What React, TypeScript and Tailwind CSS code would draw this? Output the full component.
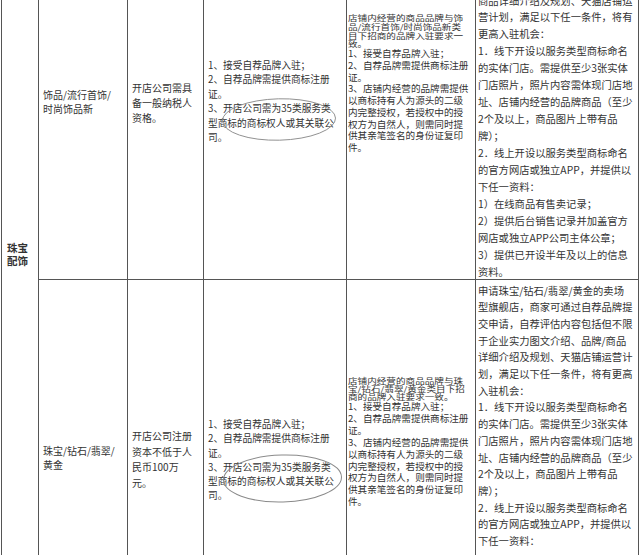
import React from 'react';

const font = { fontFamily: '"Noto Sans CJK SC", "Noto Sans", sans-serif' };

function Lines({ lines, className }: { lines: string[]; className?: string }) {
  return (
    <div className={className}>
      {lines.map((l, i) => (
        <div key={i} className="whitespace-nowrap">
          {l}
        </div>
      ))}
    </div>
  );
}

// hand-drawn ring that marks a clause
function Ring({ className }: { className: string }) {
  return (
    <svg className={`pointer-events-none absolute ${className}`} viewBox="0 0 120 50" preserveAspectRatio="none">
      <ellipse cx="60" cy="25" rx="58.5" ry="23" fill="none" stroke="#8a8a8a" strokeWidth="1" transform="rotate(-1.5 60 25)" />
    </svg>
  );
}

const brandRules = [
  '1、接受自荐品牌入驻；',
  '2、自荐品牌需提供商标注册',
  '证。',
  '3、开店公司需为35类服务类',
  '型商标的商标权人或其关联公',
  '司。',
];

const authRules = [
  '1、接受自荐品牌入驻；',
  '2、自荐品牌需提供商标注册',
  '证。',
  '3、店铺内经营的品牌需提供',
  '以商标持有人为源头的二级',
  '内完整授权，若授权中的授',
  '权方为自然人，则需同时提',
  '供其亲笔签名的身份证复印',
  '件。',
];

const conditions = [
  '1．线下开设以服务类型商标命名',
  '的实体门店。需提供至少3张实体',
  '门店照片，照片内容需体现门店地',
  '址、店铺内经营的品牌商品（至少',
  '2个及以上，商品图片上带有品',
  '牌）；',
  '2．线上开设以服务类型商标命名',
  '的官方网店或独立APP，并提供以',
  '下任一资料：',
];

const cell = 'border-r border-[#555] text-[#333]';

export default function App() {
  return (
    <div className="h-[555px] w-[640px] overflow-hidden bg-white" style={font}>
      <div className="ml-[1px] grid grid-cols-[37px_89px_76px_143px_129px_163px] grid-rows-[280px_300px] border-l border-[#555]">
        <div className={`${cell} row-span-2 pl-[5px] pt-[241px] text-[10.5px] font-bold leading-[13px] text-[#222]`}>
          <Lines lines={['珠宝', '配饰']} />
        </div>

        {/* row 1 */}
        <div className={`${cell} border-b pl-[4px] pt-[88px] text-[10px] leading-[13.5px]`}>
          <Lines lines={['饰品/流行首饰/', '时尚饰品新']} />
        </div>
        <div className={`${cell} border-b pl-[4px] pt-[80px] text-[10px] leading-[15px]`}>
          <Lines lines={['开店公司需具', '备一般纳税人', '资格。']} />
        </div>
        <div className={`${cell} relative border-b pl-[4px] pt-[58px] text-[9.7px] leading-[14.4px]`}>
          <Lines lines={brandRules} />
          <Ring className="left-[17px] top-[97px] h-[45px] w-[116px]" />
        </div>
        <div className={`${cell} border-b pl-[1px] pt-[14px] text-[9.6px]`}>
          {/* the first clause is squeezed flat in the source sheet */}
          <Lines
            className="mb-[-7.5px] origin-top scale-y-[0.82] leading-[10.4px]"
            lines={['店铺内经营的商品品牌与饰', '品/流行首饰/时尚饰品新类', '目下招商的品牌入驻要求一', '致。']}
          />
          <Lines className="leading-[11.75px]" lines={authRules} />
        </div>
        <div className={`${cell} border-b pl-[2px] text-[10.3px] leading-[16.95px]`}>
          <Lines
            className="-mt-[7.5px]"
            lines={[
              '商品详细介绍及规划、天猫店铺运',
              '营计划，满足以下任一条件，将有',
              '更高入驻机会：',
              ...conditions,
              '1）在线商品有售卖记录；',
              '2）提供后台销售记录并加盖官方',
              '网店或独立APP公司主体公章；',
              '3）提供已开设半年及以上的信息',
              '资料。',
            ]}
          />
        </div>

        {/* row 2 */}
        <div className={`${cell} pl-[4px] pt-[164px] text-[10px] leading-[14px]`}>
          <Lines lines={['珠宝/钻石/翡翠/', '黄金']} />
        </div>
        <div className={`${cell} pl-[4px] pt-[148px] text-[10px] leading-[15.7px]`}>
          <Lines lines={['开店公司注册', '资本不低于人', '民币100万', '元。']} />
        </div>
        <div className={`${cell} relative pl-[4px] pt-[137px] text-[9.7px] leading-[14.3px]`}>
          <Lines lines={brandRules} />
          <Ring className="left-[18px] top-[173px] h-[51px] w-[121px]" />
        </div>
        <div className={`${cell} pl-[1px] pt-[97px] text-[9.6px]`}>
          <Lines
            className="mb-[-6px] origin-top scale-y-[0.8] leading-[10px]"
            lines={['店铺内经营的商品品牌与珠', '宝/钻石/翡翠/黄金类目下招', '商的品牌入驻要求一致。']}
          />
          <Lines className="leading-[11.9px]" lines={authRules} />
        </div>
        <div className={`${cell} pl-[2px] pt-[2.5px] text-[10.3px] leading-[16.7px]`}>
          <Lines
            lines={[
              '申请珠宝/钻石/翡翠/黄金的卖场',
              '型旗舰店，商家可通过自荐品牌提',
              '交申请，自荐评估内容包括但不限',
              '于企业实力图文介绍、品牌/商品',
              '详细介绍及规划、天猫店铺运营计',
              '划，满足以下任一条件，将有更高',
              '入驻机会：',
              ...conditions,
            ]}
          />
        </div>
      </div>
    </div>
  );
}
